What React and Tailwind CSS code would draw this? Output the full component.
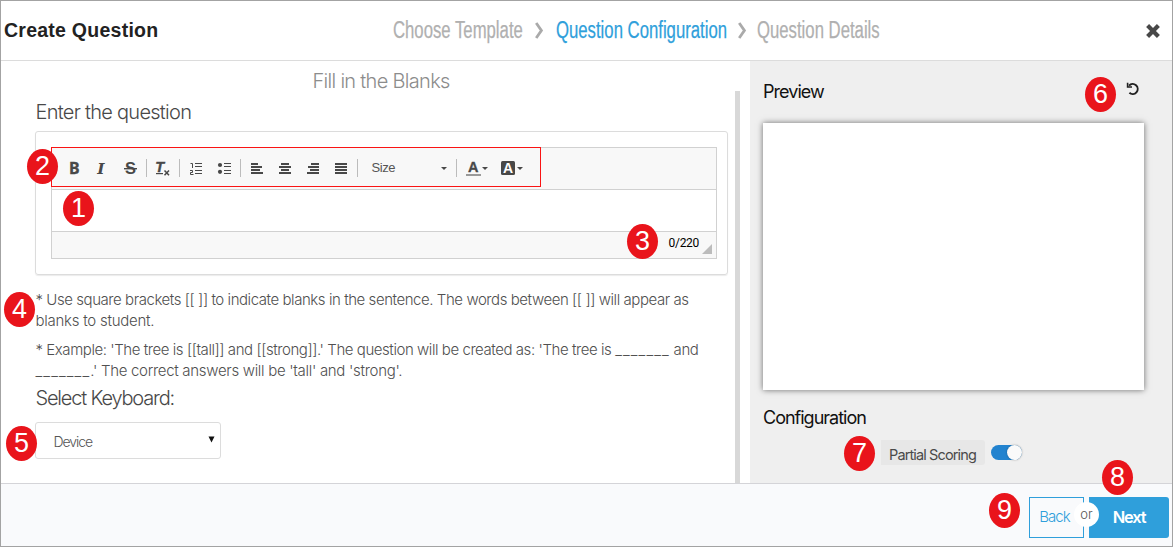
import React from "react";

const light = "font-['Inter','Liberation_Sans',sans-serif] font-light whitespace-nowrap";
const normal = "font-['Inter','Liberation_Sans',sans-serif] font-normal whitespace-nowrap";

function Badge({ n, className }) {
  return (
    <span
      className={`absolute z-10 flex h-[35px] w-[31px] items-center justify-center rounded-[50%] bg-[#e9141b] font-['Liberation_Sans',sans-serif] text-[27px] leading-none text-white ${className}`}
    >
      {n}
    </span>
  );
}

function Step({ children, width, active }) {
  return (
    <div className={width}>
      <span
        className={`inline-block origin-left scale-x-[0.727] whitespace-nowrap font-['Liberation_Sans',sans-serif] text-[23px] leading-[26px] [-webkit-text-stroke:0.25px_currentColor] ${
          active ? "text-[#2f9fdb]" : "text-[#b0b0b0]"
        }`}
      >
        {children}
      </span>
    </div>
  );
}

function StepArrow({ className }) {
  return (
    <svg className={`h-[17px] w-[9px] shrink-0 ${className}`} viewBox="0 0 9 17" fill="none" stroke="#aaa" strokeWidth="2.8">
      <path d="M1.2 1 L6.4 8.5 L1.2 16" />
    </svg>
  );
}

function Icon({ x, w, className = "", children }) {
  return (
    <svg className={`h-[22px] shrink-0 ${className}`} width={w} height="22" viewBox={`${x} 157 ${w} 22`} fill="#484848">
      {children}
    </svg>
  );
}

function Separator() {
  return <span className="h-[18px] w-px shrink-0 bg-[#bcbcbc]" />;
}

function Bars({ x, rows }) {
  return rows.map(([dx, w], i) => <rect key={i} x={x + dx} y={163 + i * 3} width={w} height="2" />);
}

function Lines({ x }) {
  return [163, 166, 170, 173].map((y) => <rect key={y} x={x} y={y} width="7" height="1" />);
}

function Toolbar() {
  return (
    <div className="flex h-[42px] border-b border-[#d1d1d1] bg-[#f8f8f8]">
      <div className="-ml-px -mt-px flex h-[40px] w-[490px] items-center border border-[#fa1414] pt-[2px]">
        <Icon x={52} w={41}>
          <text x="69" y="173.8" fontFamily="Noto Sans, sans-serif" fontWeight="700" fontSize="16" stroke="#484848" strokeWidth="0.3">B</text>
        </Icon>
        <Icon x={93} w={28}>
          <text x="97.3" y="173.8" fontFamily="DejaVu Serif, serif" fontWeight="700" fontStyle="italic" fontSize="15.5">I</text>
        </Icon>
        <Icon x={121} w={25}>
          <text x="125" y="173.8" fontFamily="Liberation Sans, sans-serif" fontWeight="700" fontSize="16.5">S</text>
          <rect x="124" y="168" width="13" height="1.4" />
        </Icon>
        <Separator />
        <Icon x={147} w={32}>
          <text x="155.2" y="172" fontFamily="Liberation Sans, sans-serif" fontWeight="700" fontStyle="italic" fontSize="14.5" stroke="#484848" strokeWidth="0.4">T</text>
          <rect x="156" y="173" width="7" height="1.2" />
          <path d="M164.5 170.5 L169 175.3 M169 170.5 L164.5 175.3" stroke="#484848" strokeWidth="1.5" />
        </Icon>
        <Separator />
        <Icon x={180} w={60}>
          <path d="M190.5 163.5 H192.5 V168 M190 170.5 H192.5 V172.5 H190.5 V174.5 H193.5" fill="none" stroke="#484848" strokeWidth="1" />
          <Lines x={195} />
          <circle cx="220" cy="165" r="2.1" />
          <circle cx="220" cy="171.8" r="2.1" />
          <Lines x={224} />
        </Icon>
        <Separator />
        <Icon x={241} w={116}>
          <Bars x={251} rows={[[0, 7], [0, 11], [0, 9], [0, 12]]} />
          <Bars x={279} rows={[[2, 8], [0, 12], [2, 8], [0, 12]]} />
          <Bars x={307} rows={[[4, 8], [1, 11], [3, 9], [0, 12]]} />
          <Bars x={335} rows={[[0, 12], [0, 12], [0, 12], [0, 12]]} />
        </Icon>
        <Separator />
        <span className="w-[83px] pl-[13.5px] font-['Liberation_Sans',sans-serif] text-[13px] leading-[18px] tracking-[-0.4px] text-[#555]">Size</span>
        <Icon x={441} w={15}>
          <path d="M441 167 H447 L444 170 Z" />
        </Icon>
        <Separator />
        <Icon x={457} w={80}>
          <text x="468" y="172" fontFamily="Liberation Sans, sans-serif" fontWeight="700" fontSize="14.5" stroke="#484848" strokeWidth="0.3">A</text>
          <rect x="466" y="174" width="15" height="2" fill="#9a9a9a" />
          <path d="M482 167 H488 L485 170 Z" />
          <rect x="501" y="161" width="14" height="14" rx="1.5" />
          <text x="503" y="173" fontFamily="Liberation Sans, sans-serif" fontWeight="700" fontSize="14" fill="#fff">A</text>
          <path d="M517 167 H523 L520 170 Z" />
        </Icon>
      </div>
    </div>
  );
}

function Editor() {
  return (
    <div className="h-[144px] w-[693px] rounded-[3px] border border-[#dcdcdc] p-[15px] shadow-[0_1px_1px_rgba(0,0,0,0.08)]">
      <div className="flex h-[112px] w-[666px] flex-col border border-[#d1d1d1]">
        <Toolbar />
        <div className="h-[41px]" />
        <div className="flex flex-1 justify-end border-t border-[#d1d1d1] bg-[#f8f8f8]">
          <span className="pt-[3px] font-['Roboto',sans-serif] text-[12px] leading-4 tracking-[-0.3px] text-black">0/220</span>
          <svg className="ml-[3px] mr-[4px] mt-[12px] size-[10px]" viewBox="0 0 10 10">
            <path d="M10 0 V10 H0 Z" fill="#bcbcbc" />
          </svg>
        </div>
      </div>
    </div>
  );
}

function QuestionPanel() {
  return (
    <section className="flex w-[749px] bg-white">
      <div className="w-[734px] pl-[34px]">
        <h2 className={`${light} ml-[277.5px] mt-[8px] text-[20px] leading-6 tracking-[-0.7px] text-[#8c8c8c]`}>Fill in the Blanks</h2>
        <h3 className={`${light} mt-[7px] pl-[0.5px] text-[20px] leading-6 tracking-[-0.73px] text-[#484848]`}>Enter the question</h3>
        <div className="mt-[7px]">
          <Editor />
        </div>
        <div className={`${light} mt-[14px] pl-[0.5px] text-[15px] leading-[21px] tracking-[-0.44px] text-[#505050]`}>
          <p>* Use square brackets [[ ]] to indicate blanks in the sentence. The words between [[ ]] will appear as</p>
          <p className="tracking-[-0.25px]">blanks to student.</p>
        </div>
        <div className={`${light} mt-[8px] pl-[0.5px] text-[15px] leading-[21px] tracking-[-0.44px] text-[#505050]`}>
          <p>
            * Example: 'The tree is [[tall]] and [[strong]].' The question will be created as: 'The tree is{" "}
            <span className="tracking-[1.1px]">_______</span> and
          </p>
          <p className="tracking-[-0.3px]">
            <span className="tracking-[1.1px]">_______</span>.' The correct answers will be 'tall' and 'strong'.
          </p>
        </div>
        <h3 className={`${light} mt-[5px] pl-[0.5px] text-[20px] leading-6 tracking-[-1.18px] text-[#484848]`}>Select Keyboard:</h3>
        <div className="mt-[12px] flex h-[37px] w-[186px] items-center justify-between rounded-[3px] border border-[#dcdcdc] pl-[17.5px] pr-[5px]">
          <span className={`${light} pt-[2px] text-[14px] tracking-[-1.05px] text-[#555]`}>Device</span>
          <svg className="-mt-[3px] h-[7px] w-[7px]" viewBox="0 0 7 7">
            <path d="M0.5 0.5 H6.5 L3.5 6.5 Z" fill="#111" />
          </svg>
        </div>
      </div>
      <div className="mt-[30px] w-[5px] bg-[#d8d8d8]" />
    </section>
  );
}

function PreviewPanel() {
  return (
    <section className="flex-1 bg-[#efefef] pl-[13px]">
      <div className="flex h-[62px] w-[381px] items-start justify-between">
        <h3 className={`${normal} pt-[19px] text-[18px] leading-6 tracking-[-0.95px] text-[#111]`}>Preview</h3>
        <svg className="mr-[4px] mt-[21px] size-[14px]" viewBox="0 0 14 14" fill="none" stroke="#222" strokeWidth="2">
          <path d="M3 3.6 A5 5 0 1 1 3.4 10.8" />
          <path d="M1.6 0.8 V5 H6" strokeWidth="1.6" />
        </svg>
      </div>
      <div className="h-[267px] w-[381px] bg-white shadow-[0_0_6px_rgba(0,0,0,0.55)]" />
      <h3 className={`${normal} mt-[16px] text-[18px] leading-6 tracking-[-1px] text-[#111]`}>Configuration</h3>
      <div className="ml-[118px] mt-[10px] flex">
        <span className={`${normal} h-[25px] w-[104px] rounded-r-[3px] bg-[#e7e7e7] pl-[8px] pt-[2px] text-[14.5px] leading-[25px] tracking-[-0.87px] text-[#4a4a4a]`}>
          Partial Scoring
        </span>
        <span className="ml-[6px] mt-[5px] flex h-[15px] w-[31px] items-center justify-end rounded-full bg-[#2283cf]">
          <span className="size-[15px] shrink-0 rounded-full bg-[#fafafa] shadow-[0_0_2px_rgba(0,0,0,0.35)]" />
        </span>
      </div>
    </section>
  );
}

export default function App() {
  return (
    <div className="relative flex h-[547px] w-[1173px] flex-col overflow-hidden border border-[#a3a3a3] bg-white">
      <header className="flex h-[60px] items-center border-b border-[#dcdcdc] bg-white">
        <h1 className="w-[391.5px] whitespace-nowrap pb-[2px] pl-[3px] font-['Liberation_Sans',sans-serif] text-[19.5px] font-bold leading-6 tracking-[0.25px] text-[#222]">
          Create Question
        </h1>
        <Step width="w-[130.5px]">Choose Template</Step>
        <StepArrow className="ml-[12px]" />
        <div className="w-[11.5px]" />
        <Step width="w-[172.5px]" active>Question Configuration</Step>
        <StepArrow className="ml-[10px]" />
        <div className="w-[9.5px]" />
        <Step width="w-[389.5px]">Question Details</Step>
        <svg className="size-[14px] shrink-0" viewBox="0 0 14 14" stroke="#484848" strokeWidth="4.2">
          <path d="M1.6 1.6 L12.4 12.4 M12.4 1.6 L1.6 12.4" />
        </svg>
      </header>
      <main className="flex h-[422px]">
        <QuestionPanel />
        <PreviewPanel />
      </main>
      <footer className="flex flex-1 justify-end border-t border-[#d4d4d8] bg-[#f9fafc] pr-[3px] pt-[13px]">
        <button className={`${light} h-[41px] w-[55px] border border-[#2f9fdb] pr-[4px] text-[15px] tracking-[-0.9px] text-[#2f9fdb]`}>Back</button>
        <div className="relative ml-[5px]">
          <button className={`${normal} h-[41px] w-[80px] rounded-r-[3px] bg-[#2f9fdb] text-[16.5px] font-semibold tracking-[-1.2px] text-white`}>Next</button>
          <span className={`${light} absolute -left-[15px] top-[5px] flex size-[25px] items-center justify-center rounded-full bg-white text-[13px] text-[#555]`}>or</span>
        </div>
      </footer>
      <Badge n="1" className="left-[62px] top-[190px]" />
      <Badge n="2" className="left-[26px] top-[148px]" />
      <Badge n="3" className="left-[626px] top-[223px]" />
      <Badge n="4" className="left-[3px] top-[291px]" />
      <Badge n="5" className="left-[5px] top-[425px]" />
      <Badge n="6" className="left-[1084px] top-[76px]" />
      <Badge n="7" className="left-[843px] top-[435px]" />
      <Badge n="8" className="left-[1101px] top-[459px]" />
      <Badge n="9" className="left-[988px] top-[492px]" />
    </div>
  );
}
